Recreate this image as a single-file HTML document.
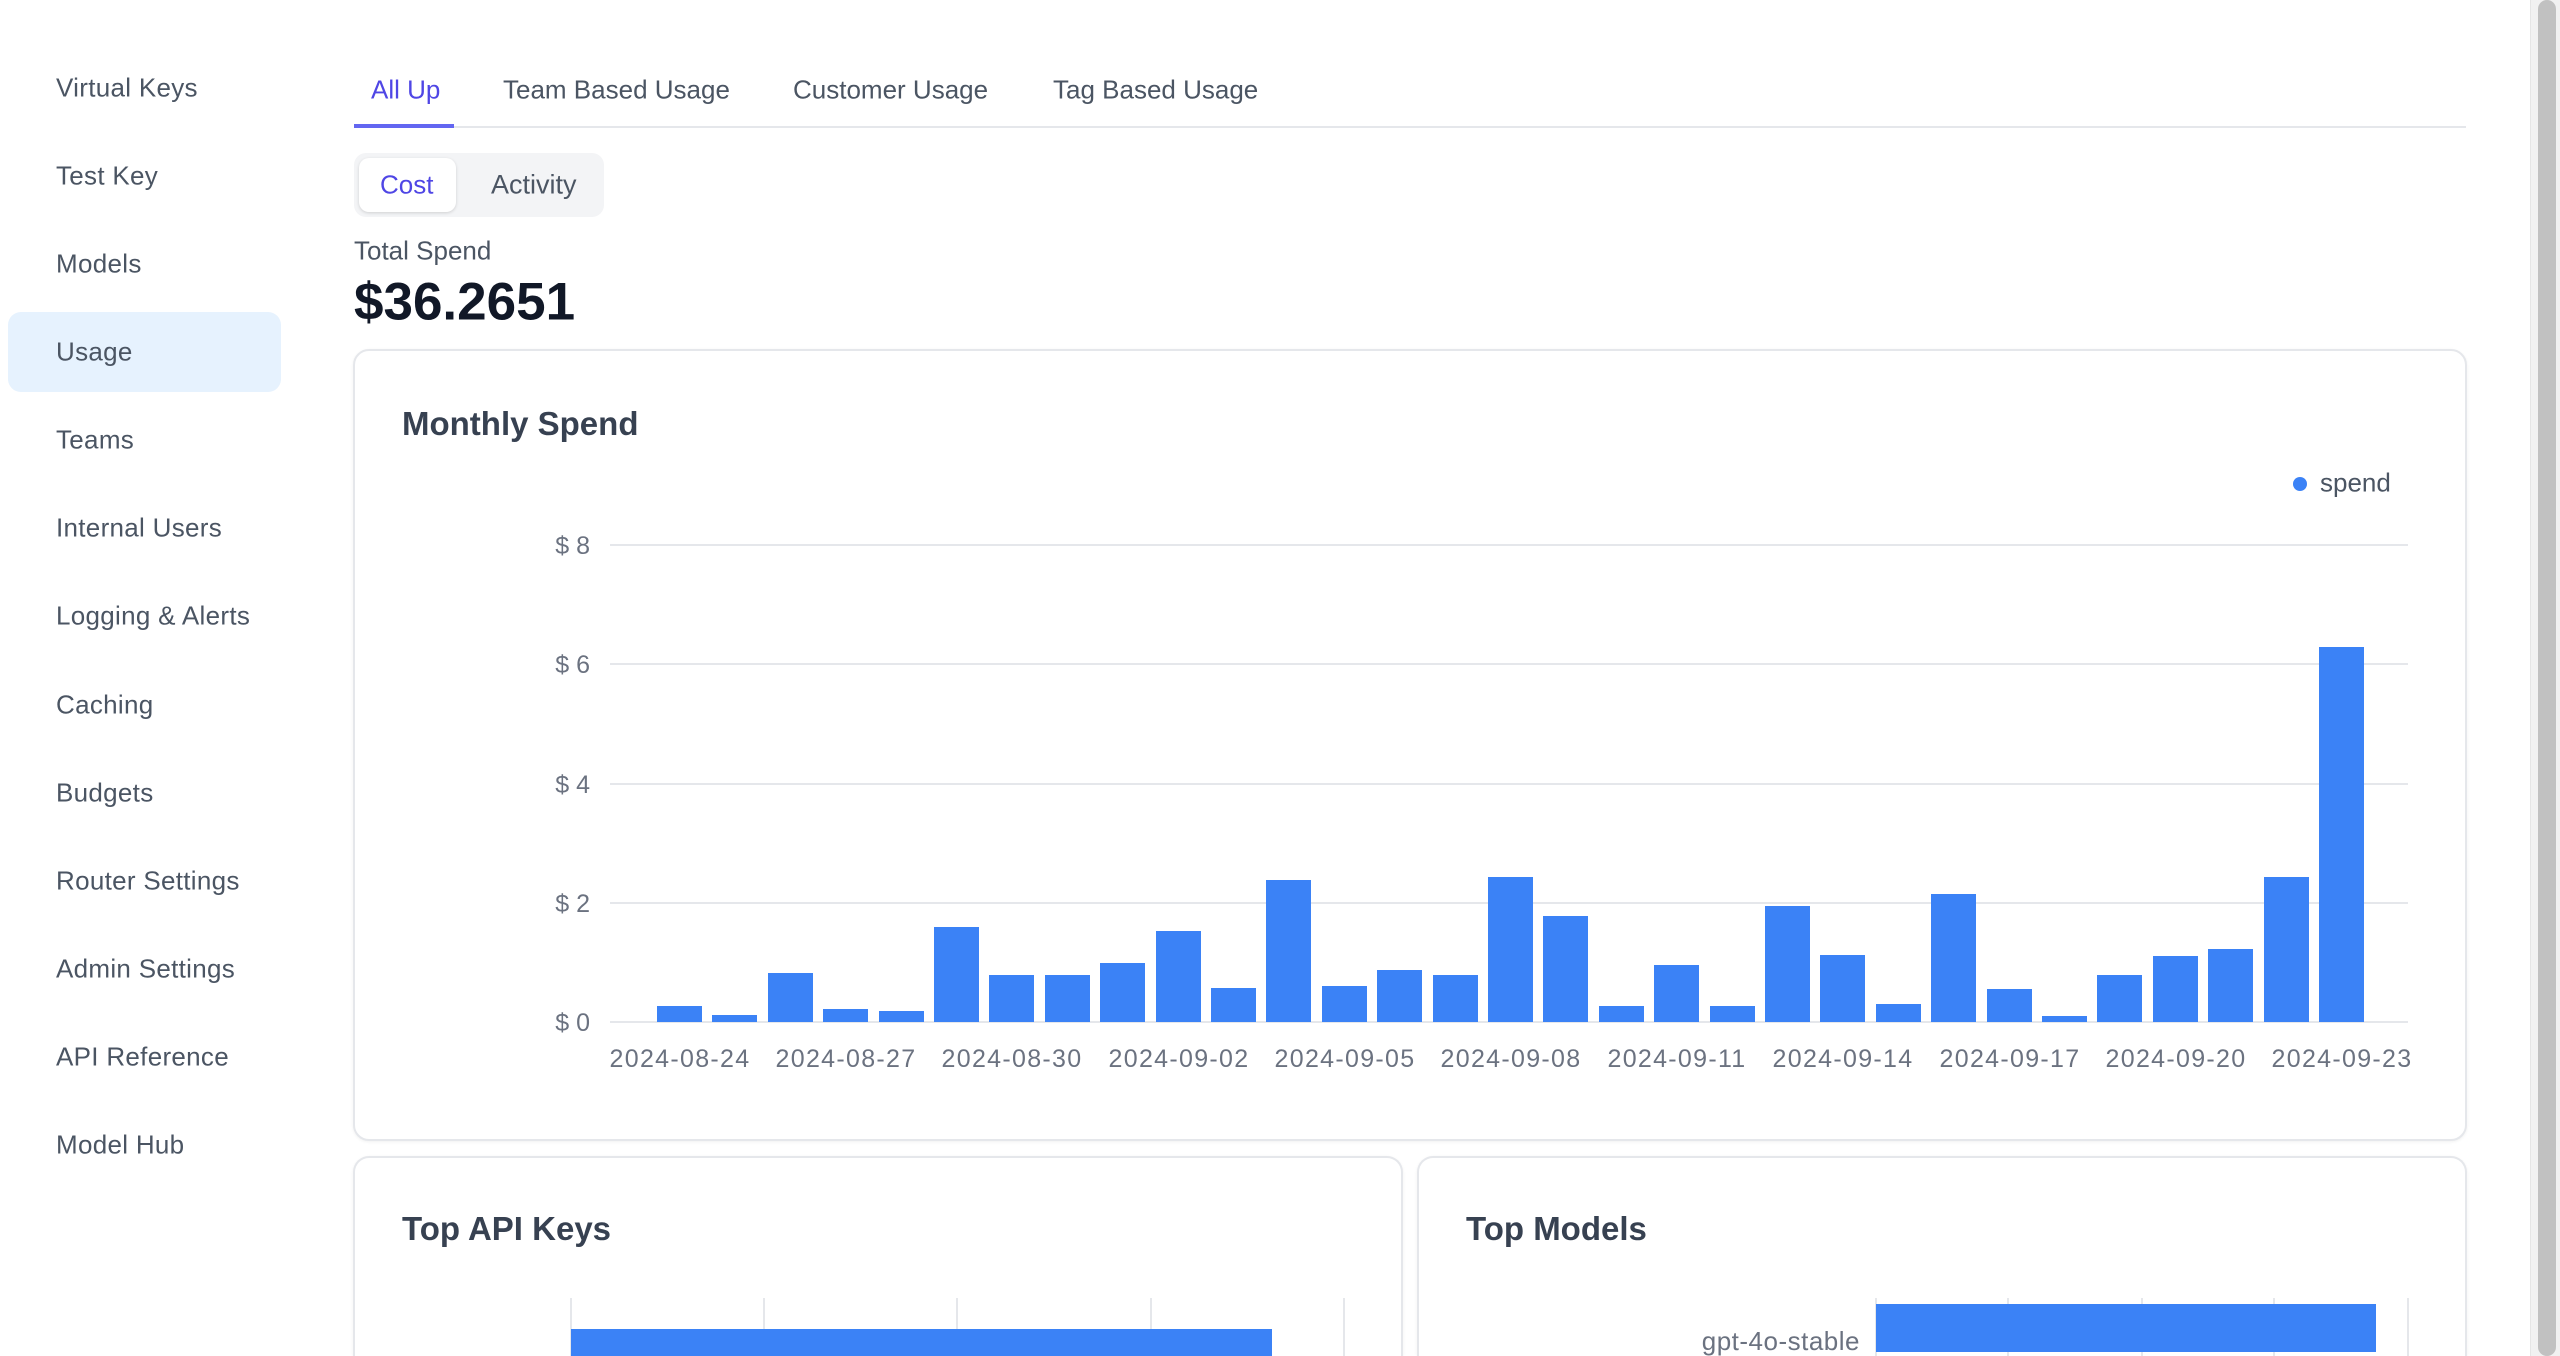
<!DOCTYPE html>
<html><head><meta charset="utf-8"><style>
*{margin:0;padding:0;box-sizing:border-box}
html,body{width:2560px;height:1356px;overflow:hidden}
body{background:#fff;font-family:"Liberation Sans",sans-serif;position:relative}
.a{position:absolute;white-space:nowrap}
.nav{left:56px;font-size:26px;letter-spacing:0.3px;color:#4b5563;transform:translateY(-50%)}
.tab{top:90px;font-size:26px;color:#4b5563;transform:translateY(-50%)}
.card{position:absolute;background:#fff;border:2px solid #e5e7eb;border-radius:16px;box-shadow:0 1px 3px rgba(0,0,0,.06)}
.title{font-size:33px;color:#374151;font-weight:bold;transform:translateY(-50%)}
</style></head><body>
<div class="a" style="left:8px;top:312px;width:273px;height:80px;background:#e6f2fe;border-radius:13px"></div>
<div class="a nav" style="top:88px">Virtual Keys</div>
<div class="a nav" style="top:176px">Test Key</div>
<div class="a nav" style="top:264px">Models</div>
<div class="a nav" style="top:352px">Usage</div>
<div class="a nav" style="top:440px">Teams</div>
<div class="a nav" style="top:528px">Internal Users</div>
<div class="a nav" style="top:616px">Logging &amp; Alerts</div>
<div class="a nav" style="top:705px">Caching</div>
<div class="a nav" style="top:793px">Budgets</div>
<div class="a nav" style="top:881px">Router Settings</div>
<div class="a nav" style="top:969px">Admin Settings</div>
<div class="a nav" style="top:1057px">API Reference</div>
<div class="a nav" style="top:1145px">Model Hub</div>

<div class="a tab" style="left:371px;color:#4f46e5">All Up</div>
<div class="a tab" style="left:503px">Team Based Usage</div>
<div class="a tab" style="left:793px">Customer Usage</div>
<div class="a tab" style="left:1053px">Tag Based Usage</div>
<div class="a" style="left:354px;top:126px;width:2112px;height:2px;background:#e5e7eb"></div>
<div class="a" style="left:354px;top:124px;width:100px;height:4px;background:#6366f1"></div>

<div class="a" style="left:354px;top:153px;width:250px;height:64px;background:#f3f4f6;border-radius:12px"></div>
<div class="a" style="left:359px;top:158px;width:97px;height:54px;background:#fff;border-radius:10px;box-shadow:0 1px 3px rgba(0,0,0,.15)"></div>
<div class="a" style="left:380px;top:185px;font-size:26px;color:#4f46e5;transform:translateY(-50%)">Cost</div>
<div class="a" style="left:491px;top:185px;font-size:27px;color:#4b5563;transform:translateY(-50%)">Activity</div>

<div class="a" style="left:354px;top:251px;font-size:26px;color:#4b5563;transform:translateY(-50%)">Total Spend</div>
<div class="a" style="left:354px;top:302px;font-size:53px;font-weight:bold;color:#111827;transform:translateY(-50%)">$36.2651</div>

<div class="card" style="left:353px;top:349px;width:2114px;height:792px"></div>
<div class="a title" style="left:402px;top:424px">Monthly Spend</div>
<div class="a" style="left:2293px;top:477px;width:14px;height:14px;border-radius:50%;background:#3b82f6"></div>
<div class="a" style="left:2320px;top:483px;font-size:26px;color:#4b5563;transform:translateY(-50%)">spend</div>

<svg class="a" style="left:0;top:0" width="2560" height="1356" font-family="Liberation Sans, sans-serif">
<g stroke="#e5e7eb" stroke-width="2">
<line x1="610" x2="2408" y1="545" y2="545"/><line x1="610" x2="2408" y1="664" y2="664"/><line x1="610" x2="2408" y1="784" y2="784"/><line x1="610" x2="2408" y1="903" y2="903"/><line x1="610" x2="2408" y1="1022" y2="1022"/>
</g>
<g fill="#6b7280" font-size="25" text-anchor="end">
<text x="590" y="554">$ 8</text><text x="590" y="673">$ 6</text><text x="590" y="793">$ 4</text><text x="590" y="912">$ 2</text><text x="590" y="1031">$ 0</text>
</g>
<g fill="#3b82f6">
<rect x="657" y="1006" width="45" height="16"/>
<rect x="712" y="1015" width="45" height="7"/>
<rect x="768" y="973" width="45" height="49"/>
<rect x="823" y="1009" width="45" height="13"/>
<rect x="879" y="1011" width="45" height="11"/>
<rect x="934" y="927" width="45" height="95"/>
<rect x="989" y="975" width="45" height="47"/>
<rect x="1045" y="975" width="45" height="47"/>
<rect x="1100" y="963" width="45" height="59"/>
<rect x="1156" y="931" width="45" height="91"/>
<rect x="1211" y="988" width="45" height="34"/>
<rect x="1266" y="880" width="45" height="142"/>
<rect x="1322" y="986" width="45" height="36"/>
<rect x="1377" y="970" width="45" height="52"/>
<rect x="1433" y="975" width="45" height="47"/>
<rect x="1488" y="877" width="45" height="145"/>
<rect x="1543" y="916" width="45" height="106"/>
<rect x="1599" y="1006" width="45" height="16"/>
<rect x="1654" y="965" width="45" height="57"/>
<rect x="1710" y="1006" width="45" height="16"/>
<rect x="1765" y="906" width="45" height="116"/>
<rect x="1820" y="955" width="45" height="67"/>
<rect x="1876" y="1004" width="45" height="18"/>
<rect x="1931" y="894" width="45" height="128"/>
<rect x="1987" y="989" width="45" height="33"/>
<rect x="2042" y="1016" width="45" height="6"/>
<rect x="2097" y="975" width="45" height="47"/>
<rect x="2153" y="956" width="45" height="66"/>
<rect x="2208" y="949" width="45" height="73"/>
<rect x="2264" y="877" width="45" height="145"/>
<rect x="2319" y="647" width="45" height="375"/>
</g>
<g fill="#6b7280" font-size="25" letter-spacing="1.3" text-anchor="middle">
<text x="680" y="1067">2024-08-24</text><text x="846" y="1067">2024-08-27</text><text x="1012" y="1067">2024-08-30</text><text x="1179" y="1067">2024-09-02</text><text x="1345" y="1067">2024-09-05</text><text x="1511" y="1067">2024-09-08</text><text x="1677" y="1067">2024-09-11</text><text x="1843" y="1067">2024-09-14</text><text x="2010" y="1067">2024-09-17</text><text x="2176" y="1067">2024-09-20</text><text x="2342" y="1067">2024-09-23</text>
</g>
</svg>

<div class="card" style="left:353px;top:1156px;width:1050px;height:200px;border-bottom:none;border-bottom-left-radius:0;border-bottom-right-radius:0"></div>
<div class="card" style="left:1417px;top:1156px;width:1050px;height:200px;border-bottom:none;border-bottom-left-radius:0;border-bottom-right-radius:0"></div>
<div class="a title" style="left:402px;top:1229px">Top API Keys</div>
<div class="a title" style="left:1466px;top:1229px">Top Models</div>
<svg class="a" style="left:0;top:0" width="2560" height="1356">
<g stroke="#e5e7eb" stroke-width="2">
<line x1="571" x2="571" y1="1298" y2="1356"/><line x1="764" x2="764" y1="1298" y2="1356"/><line x1="957" x2="957" y1="1298" y2="1356"/><line x1="1151" x2="1151" y1="1298" y2="1356"/><line x1="1344" x2="1344" y1="1298" y2="1356"/>
<line x1="1876" x2="1876" y1="1298" y2="1356"/><line x1="2008" x2="2008" y1="1298" y2="1356"/><line x1="2142" x2="2142" y1="1298" y2="1356"/><line x1="2274" x2="2274" y1="1298" y2="1356"/><line x1="2408" x2="2408" y1="1298" y2="1356"/>
</g>
<rect x="571" y="1329" width="701" height="30" fill="#3b82f6"/>
<rect x="1876" y="1304" width="500" height="48" fill="#3b82f6"/>
<text x="1860" y="1350" text-anchor="end" font-size="26" letter-spacing="0.5" fill="#6b7280" font-family="Liberation Sans, sans-serif">gpt-4o-stable</text>
</svg>

<div class="a" style="left:2530px;top:0;width:30px;height:1356px;background:#f1f1f1;border-left:1px solid #e5e5e5"></div>
<div class="a" style="left:2538px;top:0;width:18px;height:1356px;background:#c1c1c1;border-radius:9px"></div>
</body></html>
